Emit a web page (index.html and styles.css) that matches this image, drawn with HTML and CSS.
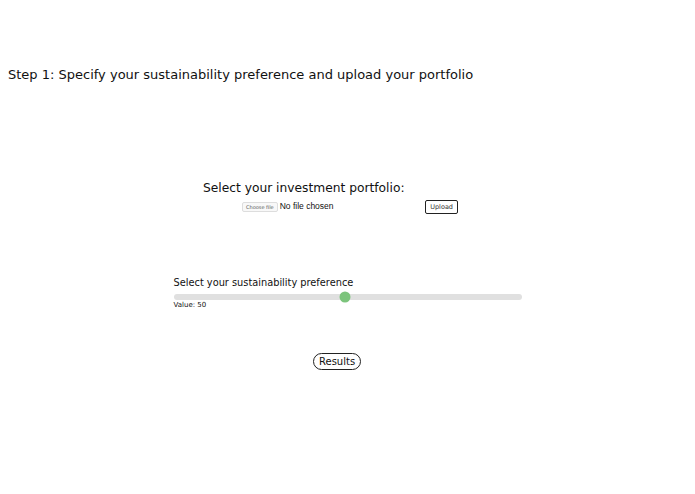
FILE: index.html
```html
<!DOCTYPE html>
<html>
<head>
<meta charset="utf-8">
<link rel="stylesheet" href="styles.css">
</head>
<body>
<h1 class="step">Step 1: Specify your sustainability preference and upload your portfolio</h1>
<section class="portfolio">
  <h2 class="portfolio-title">Select your investment portfolio:</h2>
  <div class="file-row">
    <label class="file-pick"><span class="file-btn">Choose file</span><span class="file-name">No file chosen</span></label>
    <button class="upload-btn">Upload</button>
  </div>
</section>
<section class="pref">
  <div class="pref-label">Select your sustainability preference</div>
  <div class="track"><div class="thumb" style="left:49.4%"></div></div>
  <div class="value">Value: 50</div>
</section>
<div class="results-wrap"><button class="results-btn">Results</button></div>
</body>
</html>
```
FILE: styles.css
```css
body {
  margin: 8px;
  font-family: "DejaVu Sans", sans-serif;
  color: #111;
  background: #fff;
}
.step {
  margin: 58px 0 0 0;
  font-size: 13px;
  font-weight: 400;
  line-height: 18px;
}
.portfolio {
  margin: 96px 0 0 195px;
  width: 255px;
}
.portfolio-title {
  margin: 0;
  font-size: 12.25px;
  font-weight: 400;
  line-height: 16px;
}
.file-row {
  display: flex;
  align-items: center;
  justify-content: space-between;
  margin: 4px 0 0 39px;
}
.file-pick {
  display: flex;
  align-items: center;
  gap: 2px;
}
.file-btn {
  font-size: 5px;
  color: #555;
  border: 1px solid #ddd;
  border-radius: 2px;
  padding: 1px 3px;
  background: #f8f8f8;
}
.file-name {
  font-size: 8.5px;
  font-family: "Liberation Sans", sans-serif;
  margin-top: -3px;
}
.upload-btn {
  font-family: "DejaVu Sans", sans-serif;
  font-size: 6.5px;
  color: #333;
  background: #fff;
  border: 1px solid #222;
  border-radius: 2px;
  padding: 2px 4px;
}
.pref {
  margin: 62px auto 0 auto;
  width: 348px;
}
.pref-label {
  font-size: 9.8px;
  line-height: 14px;
}
.track {
  position: relative;
  height: 6px;
  background: #e0e0e0;
  border-radius: 3px;
  margin-top: 4px;
}
.thumb {
  position: absolute;
  top: 50%;
  width: 11px;
  height: 11px;
  border-radius: 50%;
  background: #7cc47c;
  transform: translate(-50%, -50%);
}
.value {
  font-size: 7px;
  margin-top: 1px;
}
.results-wrap {
  margin: 41px 0 0 305px;
}
.results-btn {
  font-family: "DejaVu Sans", sans-serif;
  font-size: 10px;
  color: #111;
  background: #fff;
  border: 1px solid #222;
  border-radius: 10px;
  padding: 2px 5px;
}
```
